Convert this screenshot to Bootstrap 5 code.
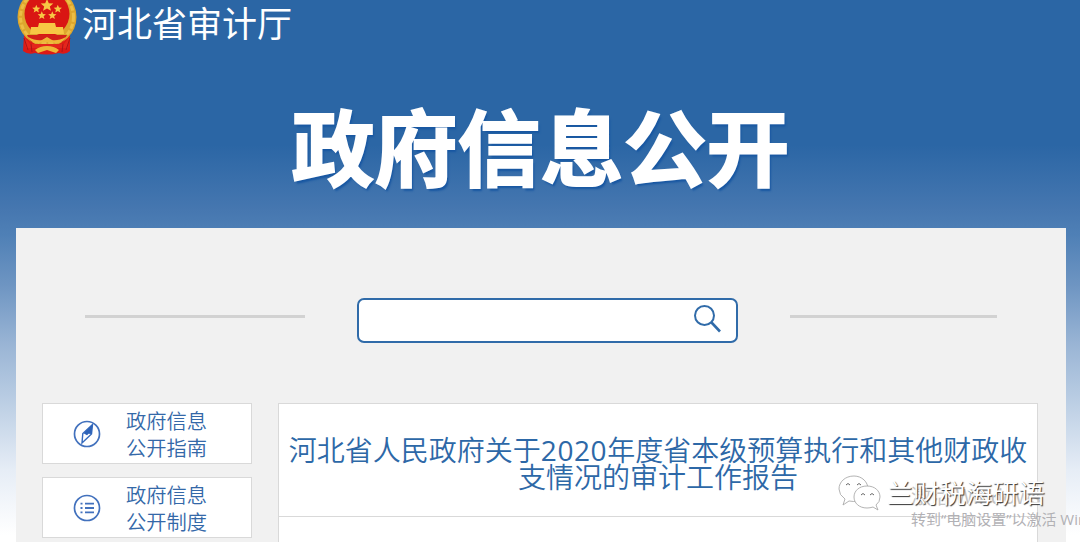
<!DOCTYPE html>
<html lang="zh-CN">
<head>
<meta charset="utf-8">
<title>河北省审计厅 政府信息公开</title>
<link href="https://cdn.jsdelivr.net/npm/bootstrap@5.3.0/dist/css/bootstrap.min.css" rel="stylesheet">
<style>
body{width:1080px;height:542px;overflow:hidden;font-family:"Noto Sans CJK SC",sans-serif;
background:linear-gradient(#2b66a5 0,#2b66a5 145px,#4677b0 210px,#4f80b6 235px,#6e95c2 285px,#9ab5d5 345px,#b7cbe2 395px,#e6edf6 470px,#fff 535px);}
.site-head{height:56px;padding-left:15px}
.emblem{width:64px;height:56px}
.org{font-size:35px;line-height:43px;color:#fff;font-weight:400;padding-left:3px}
.banner{height:172px;padding:42px 0 0 1px}
.banner h1{font-size:83px;line-height:92px;font-weight:700;color:#fff;-webkit-text-stroke:1.8px #fff;text-shadow:2px 3px 2px #1857a2;white-space:nowrap}
.panel{width:1050px;height:314px;margin-left:16px;background:#f1f1f1}
.search-row{height:175px;padding:70px 69px 0 69px}
.rule{height:3px;background:#d2d2d2;margin-top:17px}
.search-box{width:381px;height:45px;border:2px solid #306ba9;border-radius:7px;background:#fff;padding:0 14px 4px 0}
.side{width:210px;margin-left:26px}
.side-link{height:61px;border:1px solid #d9d9d9;background:#fff;margin-bottom:13px;color:#3468a8;font-size:20.3px;line-height:27px;font-weight:350;padding-left:30px}
.side-link svg{margin-right:25px;flex:none}
.article{width:760px;height:150px;margin-left:26px;border:1px solid #d9d9d9;background:#fff}
.article h2{height:113px;padding-top:32px;border-bottom:1px solid #d9d9d9;font-size:28px;line-height:27px;font-weight:350;color:#2d68a7;white-space:nowrap}
.yr{font-family:"Open Sans","Noto Sans",sans-serif;font-weight:400;letter-spacing:.6px;line-height:20px}
.wm{left:838px;top:472px;width:242px;height:70px;overflow:hidden}
.wm-name{left:49px;top:1px;font-size:26.300px;line-height:38px;color:#fff;font-weight:350;text-shadow:1px 1px 1px #333;white-space:nowrap}
.wm-back{left:73px;top:9px;font-size:20px;line-height:30px;color:#c4c4c4;white-space:nowrap}
.wm-note{left:73px;top:36px;font-family:"Open Sans","Noto Sans CJK SC",sans-serif;font-size:15px;line-height:22px;color:#b2b1b5;white-space:nowrap}
</style>
</head>
<body class="position-relative">
<header class="site-head d-flex align-items-start">
<svg class="emblem" viewBox="0 0 64 56">
<path d="M9 35L8 51q5 4 12 2 12 3 24 0 7 2 11-2V35z" fill="#dd1916"/>
<circle cx="32" cy="17" r="29.5" fill="#dda62d"/>
<circle cx="32" cy="17" r="26.500" fill="none" stroke="#ecbd45" stroke-width="3" stroke-dasharray="5 2"/>
<circle cx="32" cy="14" r="22.500" fill="#d91613"/>
<g fill="#f7c744"><path id="st" d="M32-1l1.8 4.2 4.5.3-3.5 3 1.2 4.3-4-2.3L28 10.800l1.200-4.300-3.500-3 4.500-.3z"/>
<use href="#st" transform="translate(.5 5.500) scale(.65)"/><use href="#st" transform="translate(22 5.500) scale(.65)"/><use href="#st" transform="translate(6 12) scale(.65)"/><use href="#st" transform="translate(16.500 12) scale(.65)"/>
<path d="M24 23h16l1 4h7l1 7H15l1-7h7z"/></g>
<path d="M12 35h40l-4 7H16z" fill="#d32019"/>
<path d="M9 36l2 12h42l2-12-6 8H15z" fill="#e4261c"/>
<path d="M13 37q8 4 14 3l5-3 5 3q6 1 14-3-3 6-9 6l-10-1-10 1q-6 0-9-6zM20 50q5-4 12-4t12 4l-3 3-9-3-9 3z" fill="#efb637"/>
<path d="M9 38l4 12M55 38l-4 12M16 44l1 8M48 44l-1 8" stroke="#aa1518" stroke-width="1"/>
</svg>
<div class="org text-nowrap">河北省审计厅</div>
</header>
<div class="banner text-center"><h1 class="m-0">政府信息公开</h1></div>
<main class="panel">
<div class="search-row d-flex align-items-start">
<div class="rule" style="width:220px"></div>
<div class="search-box d-flex align-items-center justify-content-end" style="margin-left:52px">
<svg width="29" height="29" viewBox="0 0 29 29" fill="none" stroke="#306ba9"><circle cx="11.500" cy="11.500" r="9.500" stroke-width="2"/><path d="M18.500 18.500l8.500 9" stroke-width="2.600"/></svg>
</div>
<div class="rule" style="width:207px;margin-left:52px"></div>
</div>
<div class="d-flex align-items-start">
<nav class="side">
<a class="side-link d-flex align-items-center text-decoration-none"><svg width="28" height="28" viewBox="0 0 28 28"><circle cx="14" cy="14" r="12.500" fill="none" stroke="#4271bd" stroke-width="1.700"/><path d="M19.500 4.500L18.500 14l-9.500 9 .8-9.500z" fill="none" stroke="#356abd" stroke-width="1.400"/><path d="M19.500 4.500L18.500 14l-3-.2-1.500 1.400-3.500-2z" fill="#2e63b8"/></svg><span>政府信息<br>公开指南</span></a>
<a class="side-link d-flex align-items-center text-decoration-none"><svg width="28" height="28" viewBox="0 0 28 28" fill="none" stroke="#4271bd"><circle cx="14" cy="14" r="12.500" stroke-width="1.700"/><path d="M12 9.700h9M12 14h9M12 18.300h9M7.500 9.700h2M7.500 14h2M7.500 18.300h2" stroke-width="1.800"/></svg><span>政府信息<br>公开制度</span></a>
</nav>
<article class="article">
<h2 class="m-0 text-center">河北省人民政府关于<span class="yr">2020</span>年度省本级预算执行和其他财政收<br>支情况的审计工作报告</h2>
</article>
</div>
</main>
<div class="wm position-absolute">
<div class="wm-back position-absolute">激活 Windows</div>
<div class="wm-note position-absolute">转到“电脑设置”以激活 Windows。</div>
<svg class="position-absolute" style="left:0;top:0" width="46" height="46" viewBox="0 0 46 46" fill="#fff" stroke="#aaa" stroke-width=".9"><path d="M16 4C7 4 1 10 1 17q0 6 6 10l-2 6 6-4q5 1 9 0 10-3 10-12C30 10 24 4 16 4z"/><path d="M29 14c-8 0-13 5-13 11s5 11 13 11q3 0 6-1l5 3-2-5q4-3 4-8c0-6-5-11-13-11z"/><path d="M8 13q2-3 4 0M19 13q2-3 4 0M23 23q2-3 4 0M32 23q2-3 4 0" fill="none" stroke="#555"/></svg>
<div class="wm-name position-absolute">兰财税海研语</div>
</div>
<script src="https://cdn.jsdelivr.net/npm/bootstrap@5.3.0/dist/js/bootstrap.bundle.min.js"></script>
</body>
</html>
